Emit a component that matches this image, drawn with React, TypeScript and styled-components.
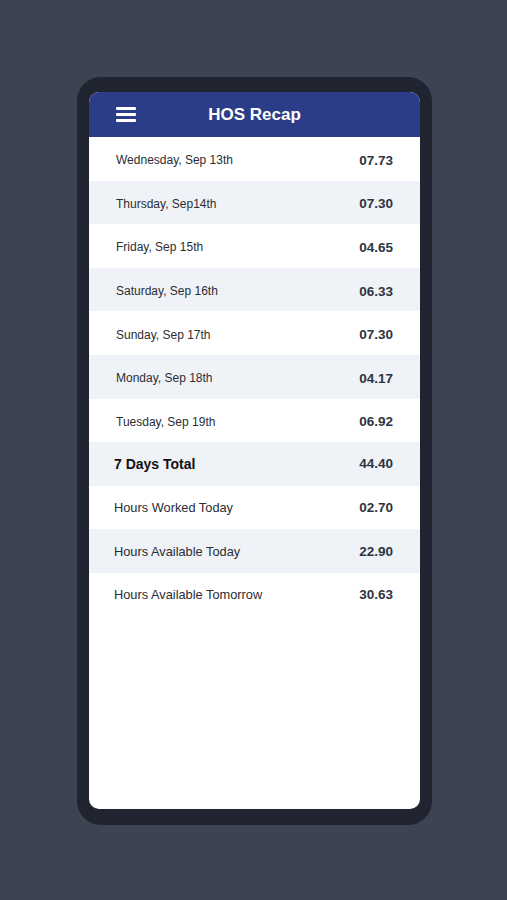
import type { FC } from 'react'
import { styled, createGlobalStyle } from 'styled-components'

const GlobalStyle = createGlobalStyle`
  html, body {
    margin: 0;
    padding: 0;
    background: #3d4350;
    font-family: 'Liberation Sans', Arial, sans-serif;
  }
`

const Page = styled.div`
  width: 507px;
  height: 900px;
  background: #3d4350;
  display: flex;
  justify-content: center;
  padding-top: 77px;
  box-sizing: border-box;
`

const Phone = styled.div`
  width: 355px;
  height: 748px;
  margin-left: 2px;
  background: #1f2430;
  border-radius: 24px;
  padding: 15px 12px 16px 12px;
  box-sizing: border-box;
`

const Screen = styled.div`
  height: 100%;
  background: #ffffff;
  border-radius: 10px;
  overflow: hidden;
  display: flex;
  flex-direction: column;
`

const Header = styled.div`
  height: 45px;
  background: #2b3d88;
  display: flex;
  align-items: center;
  padding-left: 27px;
`

const Burger = styled.div`
  display: flex;
  flex-direction: column;
  gap: 3.5px;
  width: 20px;

  span {
    display: block;
    height: 2.5px;
    background: #ffffff;
    border-radius: 1px;
  }
`

const Title = styled.h1`
  flex: 1;
  margin: 0 0 0 -47px;
  text-align: center;
  color: #ffffff;
  font-size: 17px;
  font-weight: 700;
`

const List = styled.div`
  display: flex;
  flex-direction: column;
`

const Row = styled.div<{ $alt?: boolean; $day?: boolean }>`
  height: 43.6px;
  box-sizing: border-box;
  display: flex;
  align-items: center;
  justify-content: space-between;
  padding: ${(p) => (p.$day ? '3px 27px 0' : '0 27px')};
  background: ${(p) => (p.$alt ? '#eff2f7' : '#ffffff')};
`

const Label = styled.span<{ $kind: 'day' | 'total' | 'info' }>`
  color: ${(p) => (p.$kind === 'total' ? '#111111' : '#2a2d33')};
  font-size: ${(p) => (p.$kind === 'day' ? '12px' : p.$kind === 'total' ? '14px' : '12.8px')};
  font-weight: ${(p) => (p.$kind === 'total' ? 700 : 400)};
  margin-left: ${(p) => (p.$kind === 'day' ? '0' : '-2px')};
`

const Value = styled.span`
  color: #2d3443;
  font-size: 13.5px;
  font-weight: 700;
`

const days = [
  ['Wednesday, Sep 13th', '07.73'],
  ['Thursday, Sep14th', '07.30'],
  ['Friday, Sep 15th', '04.65'],
  ['Saturday, Sep 16th', '06.33'],
  ['Sunday, Sep 17th', '07.30'],
  ['Monday, Sep 18th', '04.17'],
  ['Tuesday, Sep 19th', '06.92'],
]

const info = [
  ['Hours Worked Today', '02.70'],
  ['Hours Available Today', '22.90'],
  ['Hours Available Tomorrow', '30.63'],
]

const App: FC = () => {
  return (
    <>
      <GlobalStyle />
      <Page>
        <Phone>
          <Screen>
            <Header>
              <Burger>
                <span />
                <span />
                <span />
              </Burger>
              <Title>HOS Recap</Title>
            </Header>
            <List>
              {days.map(([d, v], i) => (
                <Row key={d} $day $alt={i % 2 === 1}>
                  <Label $kind="day">{d}</Label>
                  <Value>{v}</Value>
                </Row>
              ))}
              <Row $alt>
                <Label $kind="total">7 Days Total</Label>
                <Value>44.40</Value>
              </Row>
              {info.map(([d, v], i) => (
                <Row key={d} $alt={i % 2 === 1}>
                  <Label $kind="info">{d}</Label>
                  <Value>{v}</Value>
                </Row>
              ))}
            </List>
          </Screen>
        </Phone>
      </Page>
    </>
  )
}

export default App
